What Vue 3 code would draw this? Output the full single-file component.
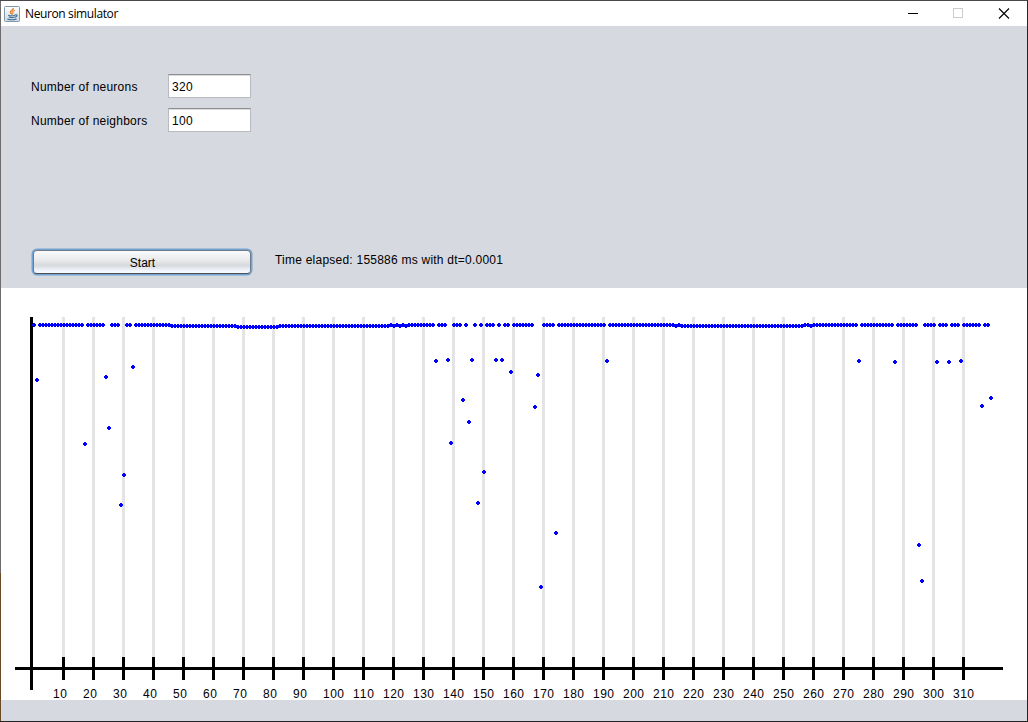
<script setup>
const outliers = {
  1: 380, 17: 444, 24: 377, 25: 428, 29: 505, 30: 475, 33: 367, 134: 361, 138: 360,
  139: 443, 143: 400, 145: 422, 146: 360, 148: 503, 150: 472, 154: 360, 156: 360,
  159: 372, 167: 407, 168: 375, 169: 587, 174: 533, 191: 361, 275: 361, 287: 362,
  295: 545, 296: 581, 301: 362, 305: 362, 309: 361, 316: 406, 319: 398
}
const flat = new Set([119, 121, 123, 215, 257, 258])

function level(i) {
  if (outliers[i]) return outliers[i]
  if (flat.has(i)) return 325
  if (i >= 68 && i <= 81) return 327
  if ((i >= 46 && i <= 124) || (i >= 214 && i <= 259)) return 326
  return 325
}

const dots = Array.from({ length: 320 }, (_, i) => {
  const x = 31 + 3 * i
  const y = level(i) - 2 - 288
  return `M${x + 1} ${y}h2v1h1v2h-1v1h-2v-1h-1v-2h1z`
}).join('')

const ticks = Array.from({ length: 31 }, (_, k) => ({ x: 61 + 30 * k, label: String((k + 1) * 10) }))
</script>

<template>
  <div class="window">
    <header class="titlebar">
      <svg class="java" width="16" height="16" viewBox="0 0 16 16">
        <defs>
          <linearGradient id="jbg" x1="0" y1="0" x2="0" y2="1">
            <stop offset="0" stop-color="#fdfdfd" />
            <stop offset="1" stop-color="#cfdbe4" />
          </linearGradient>
        </defs>
        <rect x=".5" y=".5" width="15" height="15" rx="1" fill="url(#jbg)" stroke="#8298aa" />
        <g fill="none" stroke-linecap="round">
          <path d="M9.2 2.6c.6 1.6-3.6 2.2-2.7 4 .3.6.9.8 1 1.4" stroke="#e8822c" stroke-width="1.5" />
          <path d="M10.6 4.6c-1.9.8-2.5 1.3-1.7 2.2.4.5.2.9-.3 1.3" stroke="#e8822c" stroke-width="1.1" />
          <path d="M4.6 9.4c1.5.6 4.7.5 6.2-.1M5.3 11.2c1.4.5 3.6.5 5 0M3.8 13.2c2.4.7 6 .6 8.4-.1M11.4 8.9c2.2-.5 2.4 1.4-.1 2.2" stroke="#47769b" stroke-width="1.2" />
        </g>
      </svg>
      <span class="title">Neuron simulator</span>
      <svg class="controls" width="110" height="25" viewBox="0 0 110 25" shape-rendering="crispEdges">
        <path d="M0 12h10v1H0z" />
        <rect x="45.5" y="7.5" width="9" height="9" fill="none" stroke="#ccc" />
        <path d="M91 7.5l10 10M101 7.5l-10 10" fill="none" stroke="#000" stroke-width="1.1" shape-rendering="auto" />
      </svg>
    </header>

    <section class="panel">
      <div class="field">
        <label>Number of neurons</label>
        <div class="input">320</div>
      </div>
      <div class="field">
        <label>Number of neighbors</label>
        <div class="input">100</div>
      </div>
      <div class="actions">
        <button class="start">Start</button>
        <span class="status">Time elapsed: 155886 ms with dt=0.0001</span>
      </div>
    </section>

    <svg class="chart" width="1026" height="412" viewBox="0 0 1026 412" shape-rendering="crispEdges">
      <rect v-for="t in ticks" :key="'g' + t.label" :x="t.x" y="29" width="3" height="340" fill="#e4e4e4" />
      <rect x="29" y="29" width="3" height="373" />
      <rect x="14" y="379" width="988" height="3" />
      <rect v-for="t in ticks" :key="'t' + t.label" :x="t.x" y="369" width="3" height="23" />
      <text
        v-for="t in ticks"
        :key="t.label"
        :x="t.x - 9"
        y="410"
        :textLength="t.label.length * 7"
        lengthAdjust="spacing"
      >{{ t.label }}</text>
      <path :d="dots" fill="#00f" />
    </svg>
    <footer class="bottom"></footer>
  </div>
</template>

<style scoped>
.window {
  box-sizing: border-box;
  width: 1028px;
  height: 722px;
  display: flex;
  flex-direction: column;
  padding-left: 1px;
  border: 1px solid #242424;
  border-top-color: #4a484a;
  border-left: 0;
  background: linear-gradient(#6d6b6d 572px, #6b4a25 572px);
  color: #000;
  font: 12px "Liberation Sans", Arial, sans-serif;
}
.titlebar {
  height: 25px;
  flex: none;
  display: flex;
  align-items: center;
  background: #fff;
}
.java {
  margin: 0 5px 0 3px;
}
.title {
  font: 12px/16px "Open Sans", sans-serif;
  letter-spacing: -0.38px;
}
.controls {
  margin-left: auto;
  margin-right: 9px;
}
.panel {
  box-sizing: border-box;
  height: 262px;
  flex: none;
  padding: 48px 0 0 30px;
  background: #d6d9df;
}
.field {
  display: flex;
  height: 24px;
  align-items: center;
  margin-bottom: 10px;
}
.field label {
  width: 137px;
  padding-top: 2px;
  white-space: nowrap;
  letter-spacing: 0.23px;
}
.input {
  box-sizing: border-box;
  width: 83px;
  height: 24px;
  padding: 1px 0 0 3px;
  line-height: 23px;
  background: #fff;
  border: 1px solid #b9bbc0;
  border-top: 1px solid #8d8e91;
  box-shadow: inset 0 1px #dcdcdc;
  letter-spacing: 0.33px;
}
.actions {
  display: flex;
  align-items: center;
  margin-top: 118px;
}
.start {
  box-sizing: border-box;
  width: 218px;
  height: 24px;
  margin: 0 24px 0 2px;
  padding: 2px 0 0 1px;
  border: 1px solid #6e7b8a;
  border-bottom-color: #4c5058;
  border-radius: 4px;
  box-shadow: 0 0 0 1.5px #73a4d1;
  background: linear-gradient(#fbfbfc, #e6e8ea 45%, #d6d9dd 65%, #f2f5fc 90%, #f8faff);
  color: #000;
  font: inherit;
}
.status {
  letter-spacing: 0.23px;
  margin-top: -4px;
}
.chart {
  display: block;
  flex: none;
  background: #fff;
}
.bottom {
  flex: 1;
  background: #d6d9df;
}
</style>

<style>
body {
  overflow: hidden;
}
</style>
